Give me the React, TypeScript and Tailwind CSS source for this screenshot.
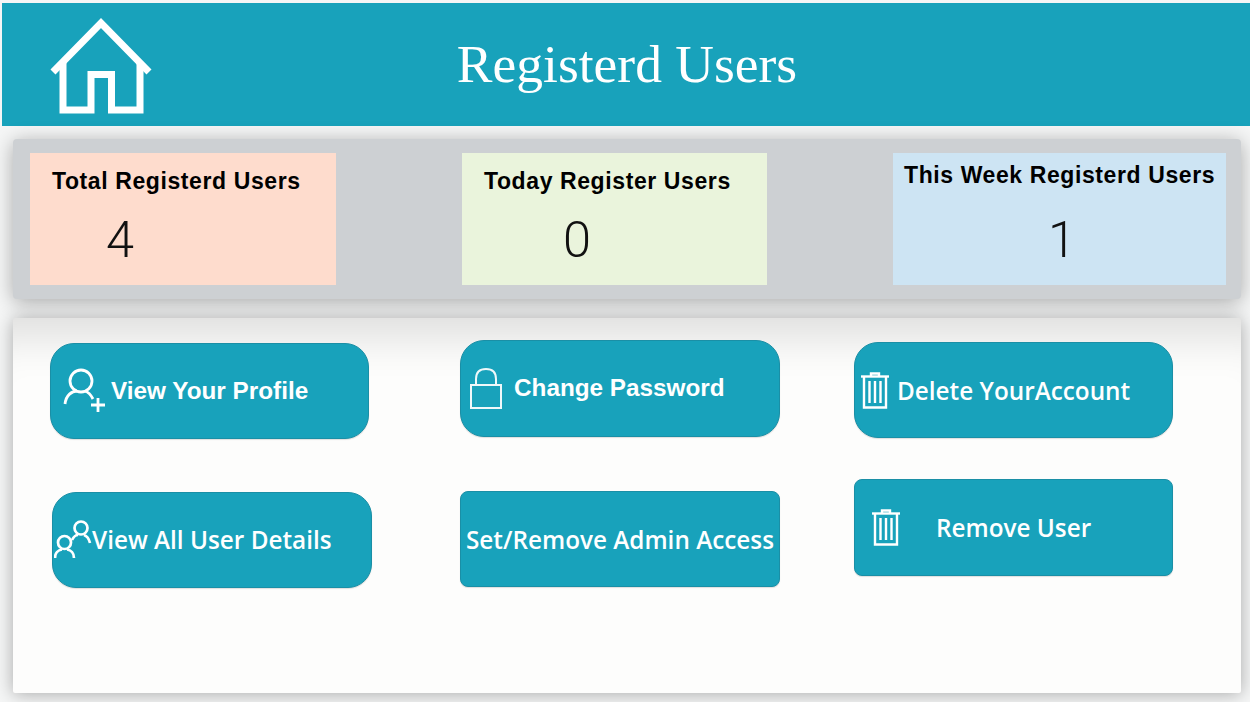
function House() {
  return (
    <svg width="104" height="98" viewBox="49 17 104 98" fill="none" stroke="#fff" strokeWidth="7" className="block">
      <path d="M53 72 L101 23 L149 72" />
      <path d="M63 62 V110 H91 V74.5 H111.5 V110 H140 V62" />
    </svg>
  );
}

function UserPlus() {
  return (
    <svg width="44" height="46" viewBox="0 0 44 46" fill="none" stroke="#fff" strokeWidth="2.8" className="block shrink-0">
      <circle cx="18" cy="13" r="11" />
      <path d="M2 36 C3 27 9 23 14 23 M22 23 C25 24 28 27 30 31" />
      <path d="M28 37 H42 M35 30 V44" />
    </svg>
  );
}

function Users() {
  return (
    <svg width="38" height="40" viewBox="0 0 38 40" fill="none" stroke="#fff" strokeWidth="2.7" className="block shrink-0">
      <circle cx="27" cy="8" r="6.5" />
      <path d="M18 20 C20 16 23 15 24 15 M30 15 C33 16 35 19 36 23" />
      <circle cx="10.5" cy="22.5" r="6.5" />
      <path d="M1 38 C1 33 4 30 8 29.5 M13 29.5 C17 30 20 33 20 38" />
    </svg>
  );
}

function Lock() {
  return (
    <svg width="32" height="41" viewBox="0 0 32 41" fill="none" stroke="#eef8fa" strokeWidth="2" className="block shrink-0">
      <rect x="1" y="17" width="30" height="23" />
      <path d="M6 17 V11 C6 4 10 1 16 1 C22 1 26 4 26 11 V17" />
    </svg>
  );
}

function Trash() {
  return (
    <svg width="28" height="37" viewBox="0 0 28 37" fill="none" stroke="#fff" strokeWidth="2.4" className="block shrink-0">
      <path d="M0 4.5 H28" />
      <path d="M10 4 V1.5 H18 V4" />
      <path d="M3 5 V35.5 H25 V5" />
      <path d="M8.5 9 V31 M14 9 V31 M19.5 9 V31" />
    </svg>
  );
}

const sans = "font-['Liberation_Sans',Arial,sans-serif] font-bold text-[24.3px]";
const open = "font-['Open_Sans',sans-serif] font-semibold text-[24.3px] mt-[1px]";
const btn = "flex items-center bg-[#18a2bb] border border-[#1a8fa6] text-white whitespace-nowrap shadow-[0_1px_1px_rgba(0,0,0,0.12)]";
const cardTitle = "font-['Liberation_Sans',Arial,sans-serif] font-bold text-[23px] leading-[28px] tracking-[0.6px] text-black";
const cardNumber = "font-['Roboto',sans-serif] font-light text-[50.5px] leading-[60px] text-[#111]";

export default function App() {
  return (
    <div className="w-[1250px] h-[702px] overflow-hidden bg-[#f5f6f6] pt-[3px]">
      <header className="ml-[2px] h-[123px] bg-[#18a2bb] grid grid-cols-[1fr_auto_1fr] items-start">
        <div className="pl-[47px] pt-[14px]">
          <House />
        </div>
        <h1 className="font-['Liberation_Serif',Georgia,serif] text-[53.5px] leading-[76px] pt-[23px] text-white ml-[2px] font-normal">
          Registerd Users
        </h1>
        <div />
      </header>

      <section className="mt-[13px] mx-[13px] h-[160px] w-[1228px] rounded-[4px] bg-[#cdd0d3] shadow-[0_3px_20px_rgba(0,0,0,0.32)] pt-[14px] pl-[17px] pr-[15px] flex justify-between">
        <div className="w-[306px] h-[132px] bg-[#fedccd] pl-[22px] pt-[14px]">
          <p className={cardTitle}>Total Registerd Users</p>
          <p className={`${cardNumber} mt-[15px] ml-[54px]`}>4</p>
        </div>
        <div className="w-[305px] h-[132px] bg-[#eaf4dc] pl-[22px] pt-[14px]">
          <p className={cardTitle}>Today Register Users</p>
          <p className={`${cardNumber} mt-[15px] ml-[79px]`}>0</p>
        </div>
        <div className="w-[333px] h-[132px] bg-[#cde4f3] pl-[11px] pt-[8px]">
          <p className={cardTitle}>This Week Registerd Users</p>
          <p className={`${cardNumber} mt-[21px] ml-[144px]`}>1</p>
        </div>
      </section>

      <section className="mt-[19px] mx-[13px] h-[375px] w-[1228px] rounded-[2px] bg-[#fdfdfc] shadow-[0_1px_18px_rgba(0,0,0,0.32),inset_0_60px_44px_-40px_rgba(0,0,0,0.12)] flex pl-[37px]">
        <div className="w-[322px] pt-[25px] flex flex-col gap-[53px]">
          <button className={`${btn} w-[319px] h-[96px] rounded-[24px] pl-[12px] gap-[4px]`}>
            <UserPlus />
            <span className={`${sans} mt-[1px]`}>View Your Profile</span>
          </button>
          <button className={`${btn} w-[320px] h-[96px] rounded-[24px] ml-[2px] pl-[1px]`}>
            <Users />
            <span className={open}>View All User Details</span>
          </button>
        </div>
        <div className="ml-[88px] w-[320px] pt-[22px] flex flex-col gap-[54px]">
          <button className={`${btn} w-[320px] h-[97px] rounded-[24px] pl-[9px] gap-[12px]`}>
            <Lock />
            <span className={sans}>Change Password</span>
          </button>
          <button className={`${btn} w-[320px] h-[96px] rounded-[8px] justify-center`}>
            <span className={`${open} pt-[1px]`}>Set/Remove Admin Access</span>
          </button>
        </div>
        <div className="ml-[74px] w-[319px] pt-[24px] flex flex-col gap-[41px]">
          <button className={`${btn} w-[319px] h-[96px] rounded-[24px] pl-[6px] gap-[8px]`}>
            <Trash />
            <span className={`${open} pt-[1px]`}>Delete YourAccount</span>
          </button>
          <button className={`${btn} w-[319px] h-[97px] rounded-[8px] pl-[17px] gap-[36px]`}>
            <Trash />
            <span className={open}>Remove User</span>
          </button>
        </div>
      </section>
    </div>
  );
}
